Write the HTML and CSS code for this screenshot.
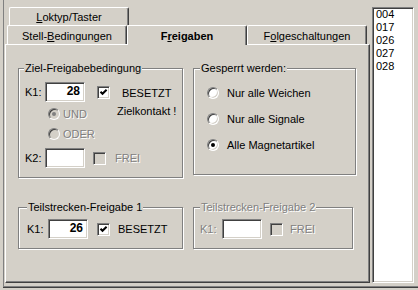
FILE: index.html
```html
<!DOCTYPE html>
<html lang="de">
<head>
  <meta charset="UTF-8">
  <title>Freigaben</title>
  <link rel="stylesheet" href="styles.css">
</head>
<body>
  <div class="frame">
    <div class="dialog">
      <div class="tab-control">
        <div class="tab-row back">
          <div class="tab"><u>L</u>oktyp/Taster</div>
        </div>
        <div class="tab-row front">
          <div class="tab">Stell-<u>B</u>edingungen</div>
          <div class="tab active">F<u>r</u>eigaben</div>
          <div class="tab">F<u>o</u>lgeschaltungen</div>
        </div>
        <div class="page">
          <div class="group ziel">
            <div class="group-title">Ziel-Freigabebedingung</div>
            <div class="line k1">
              <span class="lbl">K1:</span>
              <span class="edit">28</span>
              <span class="check"><svg width="9" height="9" viewBox="0 0 9 9"><path d="M1.5 3.8 L3.5 5.8 L7.6 1.7" fill="none" stroke="#000" stroke-width="2"/></svg></span>
              <span class="check-text">BESETZT<br>Zielkontakt !</span>
            </div>
            <div class="opt und disabled"><span class="radio on"></span>UND</div>
            <div class="opt oder disabled"><span class="radio"></span>ODER</div>
            <div class="line k2">
              <span class="lbl">K2:</span>
              <span class="edit"></span>
              <span class="check off"></span>
              <span class="check-label disabled">FREI</span>
            </div>
          </div>

          <div class="group gesperrt">
            <div class="group-title">Gesperrt werden:</div>
            <div class="opt first"><span class="radio"></span>Nur alle Weichen</div>
            <div class="opt"><span class="radio"></span>Nur alle Signale</div>
            <div class="opt"><span class="radio on"></span>Alle Magnetartikel</div>
          </div>

          <div class="group teil1">
            <div class="group-title">Teilstrecken-Freigabe 1</div>
            <div class="line">
              <span class="lbl">K1:</span>
              <span class="edit">26</span>
              <span class="check"><svg width="9" height="9" viewBox="0 0 9 9"><path d="M1.5 3.8 L3.5 5.8 L7.6 1.7" fill="none" stroke="#000" stroke-width="2"/></svg></span>
              <span class="check-label">BESETZT</span>
            </div>
          </div>

          <div class="group teil2 disabled">
            <div class="group-title">Teilstrecken-Freigabe 2</div>
            <div class="line">
              <span class="lbl">K1:</span>
              <span class="edit"></span>
              <span class="check off"></span>
              <span class="check-label">FREI</span>
            </div>
          </div>
        </div>
      </div>
      <div class="listbox">
        <div>004</div>
        <div>017</div>
        <div>026</div>
        <div>027</div>
        <div>028</div>
      </div>
    </div>
  </div>
</body>
</html>
```
FILE: styles.css
```css
* {
  margin: 0;
  padding: 0;
  box-sizing: border-box;
}

body {
  width: 418px;
  height: 290px;
  background: #d4d0c8;
  font-family: 'Liberation Sans', Arial, sans-serif;
  font-size: 11px;
  color: #000;
  overflow: hidden;
}

.frame {
  height: 287px;
  margin-left: 3px;
  padding-top: 7px;
  border-left: 1px solid #808080;
  border-bottom: 1px solid #808080;
  box-shadow: 0 1px 0 #404040;
}

.dialog {
  display: flex;
  gap: 2px;
  padding-left: 1px;
}

.tab-control {
  width: 365px;
  display: flex;
  flex-direction: column;
}

/* tabs */
.tab-row {
  display: flex;
}

.tab-row.back {
  height: 18px;
  margin-left: 4px;
}

.tab-row.front {
  height: 19px;
  margin-left: 2px;
}

.tab {
  width: 120px;
  border-top: 1px solid #fff;
  border-left: 1px solid #fff;
  border-right: 1px solid #404040;
  border-radius: 2px 2px 0 0;
  box-shadow: inset -1px 0 0 #808080;
  text-align: center;
  line-height: 13px;
}

.back .tab {
  padding-top: 3px;
}

.front .tab {
  padding-top: 4px;
}

.tab.active {
  position: relative;
  z-index: 1;
  height: 20px;
  margin-bottom: -1px;
  background: #d4d0c8;
  font-weight: bold;
}

.page {
  height: 239px;
  padding: 23px 0 0 12px;
  border: 1px solid;
  border-color: #fff #404040 #404040 #fff;
  box-shadow: inset -1px -1px 0 #808080;
  display: grid;
  grid-template-columns: 165px 163px;
  column-gap: 10px;
  row-gap: 29px;
  align-content: start;
  align-items: start;
}

/* group boxes */
.group {
  display: flex;
  flex-direction: column;
  border: 1px solid #808080;
  box-shadow: inset 1px 1px 0 #fff, 1px 1px 0 #fff;
}

.group-title {
  align-self: flex-start;
  margin-top: -7px;
  padding: 0 1px;
  line-height: 13px;
  background: #d4d0c8;
}

.group.ziel {
  height: 110px;
  padding-left: 6px;
}

.ziel .group-title {
  margin-left: -1px;
}

.group.gesperrt {
  height: 107px;
}

.gesperrt .group-title {
  margin-left: 6px;
}

.group.teil1 {
  height: 42px;
}

.teil1 .group-title {
  margin-left: 8px;
}

.group.teil2 {
  width: 160px;
  height: 42px;
}

.teil2 .group-title {
  margin-left: 6px;
}

/* controls */
.line {
  display: flex;
  align-items: flex-start;
  height: 20px;
}

.lbl {
  width: 20px;
  line-height: 20px;
}

.edit {
  width: 40px;
  height: 20px;
  padding-right: 4px;
  background: #fff;
  border: 1px solid;
  border-color: #808080 #fff #fff #808080;
  box-shadow: inset 1px 1px 0 #404040, inset -1px -1px 0 #d4d0c8;
  text-align: right;
  font-weight: bold;
  font-size: 12px;
  line-height: 17px;
}

.check {
  width: 13px;
  height: 13px;
  margin-top: 4px;
  padding: 1px;
  background: #fff;
  border: 1px solid;
  border-color: #808080 #fff #fff #808080;
  box-shadow: inset 1px 1px 0 #404040, inset -1px -1px 0 #d4d0c8;
  display: flex;
}

.check svg {
  display: block;
}

.check.off {
  background: #d4d0c8;
}

.check-label {
  line-height: 20px;
}

.check-text {
  margin: 2px 0 0 7px;
  text-align: center;
  line-height: 18px;
}

.k1 {
  margin-top: 7px;
}

.k1 .check {
  margin-left: 12px;
}

.k2 {
  margin-top: 7px;
}

.k2 .check {
  margin-left: 8px;
}

.k2 .check-label {
  margin-left: 9px;
}

.teil1 .line {
  margin: 5px 0 0 8px;
}

.teil1 .lbl {
  width: 21px;
}

.teil1 .check {
  margin-left: 9px;
}

.teil1 .check-label {
  margin-left: 8px;
}

.teil2 .line {
  margin: 5px 0 0 6px;
}

.teil2 .lbl {
  width: 22px;
}

.teil2 .check {
  margin-left: 8px;
}

.teil2 .check-label {
  margin-left: 7px;
}

.opt {
  display: flex;
  align-items: center;
  height: 14px;
}

.radio {
  width: 12px;
  height: 12px;
  border-radius: 50%;
  background: #fff;
  border: 1px solid;
  border-color: #808080 #fff #fff #808080;
  box-shadow: inset 1px 1px 0 #404040, inset -1px -1px 0 #d4d0c8;
  display: flex;
  align-items: center;
  justify-content: center;
}

.radio.on::after {
  content: '';
  width: 4px;
  height: 4px;
  border-radius: 50%;
  background: #000;
}

.ziel .opt {
  margin-left: 23px;
}

.ziel .radio {
  margin-right: 3px;
}

.opt.und {
  margin-top: 5px;
}

.opt.oder {
  margin-top: 6px;
}

.gesperrt .opt {
  margin: 12px 0 0 13px;
}

.gesperrt .opt.first {
  margin-top: 11px;
}

.gesperrt .radio {
  margin-right: 8px;
}

/* disabled look */
.disabled .lbl,
.disabled .check-label,
.check-label.disabled,
.disabled.opt,
.teil2 .group-title {
  color: #808080;
  text-shadow: 1px 1px 0 #fff;
}

.disabled .radio {
  background: #d4d0c8;
}

.disabled .radio.on::after {
  background: #808080;
}

/* list */
.listbox {
  width: 42px;
  height: 276px;
  padding-left: 2px;
  background: #fff;
  border: 1px solid;
  border-color: #808080 #fff #fff #808080;
  box-shadow: inset 1px 1px 0 #404040, inset -1px -1px 0 #d4d0c8;
  line-height: 13px;
}

.listbox div {
  padding-left: 1px;
}
```
